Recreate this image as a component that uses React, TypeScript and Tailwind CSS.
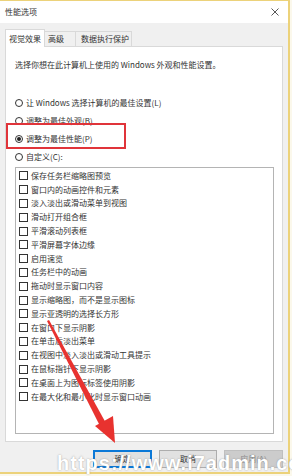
import React from "react";

const items = [
  "保存任务栏缩略图预览",
  "窗口内的动画控件和元素",
  "淡入淡出或滑动菜单到视图",
  "滑动打开组合框",
  "平滑滚动列表框",
  "平滑屏幕字体边缘",
  "启用速览",
  "任务栏中的动画",
  "拖动时显示窗口内容",
  "显示缩略图，而不是显示图标",
  "显示亚透明的选择长方形",
  "在窗口下显示阴影",
  "在单击后淡出菜单",
  "在视图中淡入淡出或滑动工具提示",
  "在鼠标指针下显示阴影",
  "在桌面上为图标标签使用阴影",
  "在最大化和最小化时显示窗口动画",
];

function Radio({ checked, label }: { checked?: boolean; label: string }) {
  return (
    <div className="flex items-center h-[18px]">
      <div className="w-[8px] h-[8px] rounded-full border border-[#333] bg-white flex items-center justify-center">
        {checked && <div className="w-[4px] h-[4px] rounded-full bg-[#222]" />}
      </div>
      <span className="ml-[3px] leading-[10px]">{label}</span>
    </div>
  );
}

export default function App() {
  const tip = [115, 443];
  return (
    <div
      className="relative w-[292px] h-[476px] overflow-hidden bg-[#fbf8ec] text-[#333] text-[8px]"
      style={{ fontFamily: '"Noto Sans CJK SC", "Noto Sans", sans-serif' }}
    >
      <div className="w-[290px] h-[474px] border-t border-r-2 border-b-2 border-[#ecd27a] bg-[#f0f0f0] flex flex-col">
        {/* title bar */}
        <div className="h-[22px] bg-white flex items-center justify-between pl-[5px] pr-[9px]">
          <span className="leading-[10px]">性能选项</span>
          <svg width="8" height="8" viewBox="0 0 8 8">
            <path d="M0.5 0.5 L7.5 7.5 M7.5 0.5 L0.5 7.5" stroke="#444" strokeWidth="0.9" />
          </svg>
        </div>
        {/* body */}
        <div className="px-[5px] pt-[6px] flex flex-col">
          {/* tabs */}
          <div className="flex items-end h-[17px] relative z-10">
            <div className="h-[18px] px-[3px] bg-white border border-b-0 border-[#d9d9d9] flex items-center -mb-[1px]">
              <span className="leading-[10px]">视觉效果</span>
            </div>
            <div className="h-[15px] w-[31px] px-[3px] border-t border-r border-[#d9d9d9] flex items-center">
              <span className="leading-[10px]">高级</span>
            </div>
            <div className="h-[15px] w-[56px] pl-[5px] border-t border-r border-[#d9d9d9] flex items-center">
              <span className="leading-[10px]">数据执行保护</span>
            </div>
          </div>
          {/* panel */}
          <div className="h-[396px] bg-white border border-[#d9d9d9] px-[9px] pt-[13px] flex flex-col">
            <div className="leading-[10px]">选择你想在此计算机上使用的 Windows 外观和性能设置。</div>
            <div className="mt-[24px] flex flex-col">
              <Radio label="让 Windows 选择计算机的最佳设置(L)" />
              <Radio label="调整为最佳外观(B)" />
              <Radio checked label="调整为最佳性能(P)" />
              <Radio label="自定义(C):" />
            </div>
            <div className="mt-[1px] w-[259px] h-[267px] border border-[#b4b4b4] pt-[1px] pl-[3px] flex flex-col">
              {items.map((t) => (
                <div key={t} className="flex items-center h-[13.8px]">
                  <div className="w-[9px] h-[9px] border border-[#333] bg-white" />
                  <span className="ml-[3px] leading-[10px]">{t}</span>
                </div>
              ))}
            </div>
          </div>
          {/* buttons */}
          <div className="flex justify-end gap-[7px] mt-[8px]">
            <div className="w-[59px] h-[18px] bg-[#e1e1e1] border-2 border-[#0a78d7] flex items-center justify-center">
              <span className="leading-[10px]">确定</span>
            </div>
            <div className="w-[58px] h-[18px] bg-[#e1e1e1] border border-[#adadad] flex items-center justify-center">
              <span className="leading-[10px]">取消</span>
            </div>
            <div className="w-[59px] h-[18px] bg-[#cccccc] border border-[#bfbfbf] text-[#8a8a8a] flex items-center justify-center">
              <span className="leading-[10px]">应用(A)</span>
            </div>
          </div>
        </div>
      </div>

      {/* red highlight box */}
      <div className="absolute left-[6px] top-[123px] w-[120px] h-[26px] border-2 border-[#e0343a]" />

      {/* red arrow */}
      <svg className="absolute left-0 top-0" width="292" height="476" viewBox="0 0 292 476">
        <polygon points="47,321 49,320 107,425 101,428" fill="#e8322f" />
        <polygon points={`${tip[0]},${tip[1]} 95,426 113,416`} fill="#e8322f" />
      </svg>

      {/* watermark */}
      <div
        className="absolute left-[57px] top-[452px] whitespace-nowrap text-white font-bold text-[20px] leading-[22px] tracking-[1px]"
        style={{
          fontFamily: '"Liberation Sans", Arial, sans-serif',
          textShadow: "0 0 1.5px rgba(110,110,110,0.7)",
        }}
      >
        https://www.i7admin.cc
      </div>
    </div>
  );
}
